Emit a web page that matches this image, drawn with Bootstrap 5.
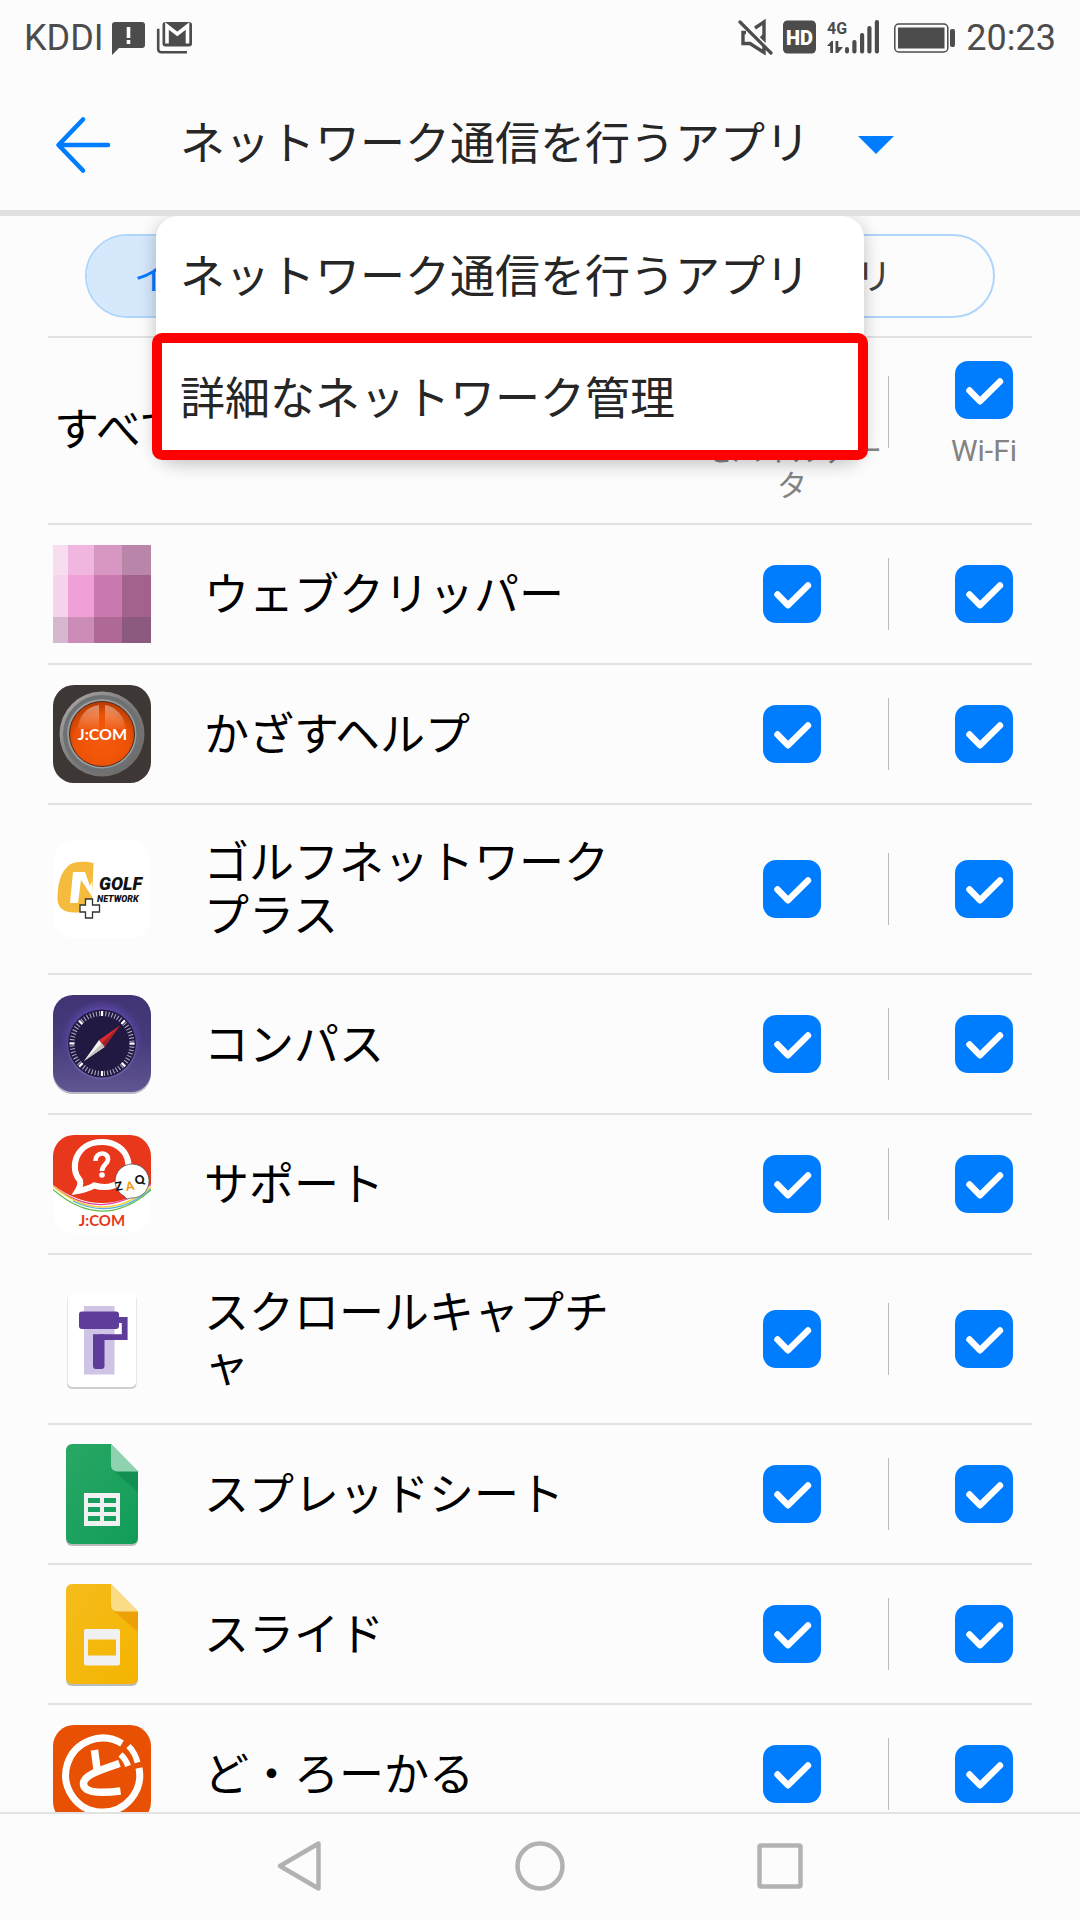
<!DOCTYPE html>
<html lang="ja">
<head>
<meta charset="utf-8">
<meta name="viewport" content="width=device-width, initial-scale=1">
<title>ネットワーク通信を行うアプリ</title>
<link href="https://cdn.jsdelivr.net/npm/bootstrap@5.3.0/dist/css/bootstrap.min.css" rel="stylesheet">
<style>
  :root { --accent: #007dff; --line: #e2e2e2; --paper: #fcfcfc; --status: #4c4c4c; }
  body { background: var(--paper); color: #000; font-family: Roboto, "Noto Sans CJK JP", sans-serif; font-size: 45px; line-height: 53px; }
  svg { display: block; flex: none; overflow: visible; }
  .status-bar { height: 76px; padding: 0 24px; font-size: 36px; line-height: 42px; color: var(--status); }
  .status-icons { gap: 11px; }
  .title-bar { height: 140px; padding: 3px 56px 0; border-bottom: 6px solid #e0e0e0; }
  .title-toggle { margin-left: 70px; gap: 48px; font-size: 45px; line-height: 53px; color: #262626; }
  .title-menu.dropdown-menu { top: calc(100% + 6px); left: 156px; right: 216px; z-index: 5; padding: 0; border: 0; border-radius: 22px; font-size: 45px; background: #fff; box-shadow: 0 4px 18px rgba(0,0,0,.24); clip-path: inset(0 -30px -30px -30px); }
  .title-menu .dropdown-item { height: 122px; padding: 0 24px; color: #262626; background: none; }
  .picked::after { content: ""; position: absolute; inset: -5px -4px 0; border: 10px solid #f00; border-radius: 10px; pointer-events: none; }
  .app-scroll { overflow-y: auto; scrollbar-width: none; }
  .app-scroll::-webkit-scrollbar { display: none; }
  .kind-tabs { margin: 18px 85px; height: 84px; border: 2px solid #b0d5fd; border-radius: 42px; overflow: hidden; }
  .kind-tabs .btn { font-size: 36px; line-height: 42px; color: #404040; border: 0; border-radius: 0; padding: 4px 0 0; }
  .kind-tabs .btn.active { background: #d6e8fc; color: var(--accent); }
  .hairline { height: 2px; margin: 0 48px; background: var(--line); }
  .app-row { min-height: 138px; padding: 16px 0; padding-left: 53px; }
  .app-row.tall { min-height: 168px; }
  .app-label { flex: 1 1 0; min-width: 0; padding: 2px 60px 0 53px; line-break: anywhere; }
  .all-row { padding-left: 54px; min-height: 185px; }
  .tick-col { width: 192px; flex: none; }
  .tick-sep { width: 1px; height: 72px; margin-right: -1px; background: #bbb; flex: none; }
  .all-row .tick-col { padding: 23px 5px 20px; gap: 14px; }
  .all-row .tick-sep { margin-top: 38px; }
  .tick-col label { font-size: 30px; line-height: 35px; color: #838383; text-align: center; }
  .form-check-input.tick { width: 58px; height: 58px; margin: 0; border: 0; border-radius: 13px; flex: none; }
  .form-check-input.tick:checked { background-color: var(--accent); background-size: 100% 100%; background-image: url("data:image/svg+xml,%3csvg xmlns='http://www.w3.org/2000/svg' viewBox='0 0 58 58'%3e%3cpath d='M14.5 29.5L25 40.3L45 20.5' fill='none' stroke='%23fff' stroke-width='6.4' stroke-linecap='round' stroke-linejoin='round'/%3e%3c/svg%3e"); }
  .nav-keys { height: 108px; padding-bottom: 2px; border-top: 2px solid var(--line); gap: 190px; }
</style>
</head>
<body>
<div class="vh-100 d-flex flex-column overflow-hidden">

  <div class="status-bar d-flex align-items-center justify-content-between flex-shrink-0">
    <div class="status-icons d-flex align-items-center">
      <span>KDDI</span>
      <svg class="ms-n1" width="33" height="34" viewBox="3 1 33 34"><g transform="translate(0 1)"><path d="M3 1h27a3 3 0 0 1 3 3v20a3 3 0 0 1-3 3H7l-7 7V4a3 3 0 0 1 3-3z" fill="#4c4c4c"/><path d="M16.500 6v11M16.500 19v4" stroke="#fff" stroke-width="3.600"/></g></svg>
      <svg width="35" height="33" viewBox="2 1 35 33"><path d="M1.200 7v20.500a3 3 0 0 0 3 3H30" transform="translate(0 .8)" fill="none" stroke="#4c4c4c" stroke-width="2.600"/><rect x="5.500" y="1" width="29.500" height="24.500" rx="3" fill="#4c4c4c"/><path d="M10 22.500V5l10.300 8L30.500 5v17.500" fill="none" stroke="#fff" stroke-width="3.600"/></svg>
    </div>
    <div class="status-icons d-flex align-items-center">
      <svg width="33" height="34" viewBox="0 1 33 34" fill="none" stroke="#4c4c4c"><path d="M1 2L32 33" stroke-width="3.200" stroke-linecap="round"/><path d="M7 12.500H4v11h7l14 9v-6M16 8l9-6v17l-3-3" stroke-width="3.400"/></svg>
      <svg width="33" height="34" viewBox="0 1 33 34"><rect y=".5" width="33" height="33" rx="4.500" fill="#4c4c4c"/><text x="16.500" y="24.500" font-family="Roboto, sans-serif" font-weight="900" font-size="20" text-anchor="middle" fill="#fff">HD</text></svg>
      <svg width="52" height="34" viewBox="0 1 52 34" fill="#4c4c4c"><text x="0" y="14" font-family="Roboto, sans-serif" font-weight="700" font-size="16">4G</text><path d="M0 26l4.500-5H6v12H3.200v-7zM8.500 21h2.800v6H16l-5 6H8.500z"/><rect x="18" y="27" width="4" height="6.500" rx="2"/><rect x="25.300" y="20" width="4.200" height="13.500" rx="2"/><rect x="33" y="13" width="4.200" height="20.500" rx="2"/><rect x="40.300" y="6" width="4.200" height="27.500" rx="2"/><rect x="47.800" y="0" width="4.200" height="33.500" rx="2"/></svg>
      <svg class="ms-1" width="61" height="30" viewBox="0 0 61 30"><rect x=".8" y="1" width="53" height="28" rx="4" fill="none" stroke="#4c4c4c" stroke-width="1.500"/><rect x="4" y="4.500" width="46.500" height="21" fill="#4c4c4c"/><rect x="56" y="6" width="5" height="18" rx="2" fill="#4c4c4c"/></svg>
      <span>20:23</span>
    </div>
  </div>

  <header class="title-bar position-relative d-flex align-items-center flex-shrink-0">
    <button class="btn p-0 border-0" type="button" aria-label="戻る">
      <svg width="54" height="56" viewBox="0 0 54 56" fill="none" stroke="#007dff" stroke-width="4.600" stroke-linecap="round" stroke-linejoin="round"><path d="M27 2.500L2.500 28L27 53.500M3 28h49"/></svg>
    </button>
    <button class="title-toggle btn p-0 border-0 d-flex align-items-center text-nowrap" type="button" aria-expanded="true" aria-controls="titleMenu">
      ネットワーク通信を行うアプリ
      <svg width="36" height="18" viewBox="0 0 36 18"><path d="M0 0h36L18 18z" fill="#007dff"/></svg>
    </button>
    <ul class="title-menu dropdown-menu show" id="titleMenu">
      <li><a class="dropdown-item d-flex align-items-center" href="#apps">ネットワーク通信を行うアプリ</a></li>
      <li class="picked position-relative"><a class="dropdown-item d-flex align-items-center" href="#detail">詳細なネットワーク管理</a></li>
    </ul>
  </header>

  <main class="app-scroll flex-fill">
    <div class="kind-tabs d-flex">
      <button class="btn active col" type="button">インストール済アプリ</button>
      <button class="btn col" type="button">システムアプリ</button>
    </div>
    <div class="hairline"></div>

    <div class="all-row d-flex align-items-start">
      <span class="flex-fill align-self-center">すべて</span>
      <div class="tick-col d-flex flex-column align-items-center">
        <input class="form-check-input tick" type="checkbox" id="allMobile" checked>
        <label for="allMobile">モバイルデータ</label>
      </div>
      <span class="tick-sep"></span>
      <div class="tick-col d-flex flex-column align-items-center">
        <input class="form-check-input tick" type="checkbox" id="allWifi" checked>
        <label for="allWifi">Wi-Fi</label>
      </div>
    </div>
    <div class="hairline"></div>

    <ul class="list-unstyled m-0" id="apps">
      <li>
        <div class="app-row d-flex align-items-center">
          <svg width="98" height="98" viewBox="0 0 98 98" shape-rendering="crispEdges"><path fill="#f8ddf0" d="M0 0h15v30H0z"/><path fill="#f0b6df" d="M15 0h26v30H15z"/><path fill="#d797c2" d="M41 0h28v30H41z"/><path fill="#b985a9" d="M69 0h29v30H69z"/><path fill="#f7d3ec" d="M0 30h15v42H0z"/><path fill="#efa1d7" d="M15 30h26v42H15z"/><path fill="#c978b0" d="M41 30h28v42H41z"/><path fill="#a3628d" d="M69 30h29v42H69z"/><path fill="#d5b8cd" d="M0 72h15v26H0z"/><path fill="#cb8db8" d="M15 72h26v26H15z"/><path fill="#ae6997" d="M41 72h28v26H41z"/><path fill="#8d5a7f" d="M69 72h29v26H69z"/></svg>
          <span class="app-label">ウェブクリッパー</span>
          <div class="tick-col d-flex justify-content-center"><input class="form-check-input tick" type="checkbox" aria-label="ウェブクリッパー モバイルデータ" checked></div>
          <span class="tick-sep"></span>
          <div class="tick-col d-flex justify-content-center"><input class="form-check-input tick" type="checkbox" aria-label="ウェブクリッパー Wi-Fi" checked></div>
        </div>
        <div class="hairline"></div>
      </li>
      <li>
        <div class="app-row d-flex align-items-center">
          <svg width="98" height="98" viewBox="0 0 98 98">
            <defs>
              <linearGradient id="ring" x1="0" y1="0" x2="1" y2="1"><stop offset="0" stop-color="#b0aeac"/><stop offset=".5" stop-color="#7c7a79"/><stop offset="1" stop-color="#6b6665"/></linearGradient>
              <radialGradient id="knob" cx=".5" cy=".62" r=".6"><stop offset="0" stop-color="#f65a0c"/><stop offset=".7" stop-color="#ec5206"/><stop offset="1" stop-color="#b93c02"/></radialGradient>
              <linearGradient id="shine" x1="0" y1="0" x2="0" y2="1"><stop offset="0" stop-color="#fff" stop-opacity=".42"/><stop offset="1" stop-color="#fff" stop-opacity=".06"/></linearGradient>
            </defs>
            <rect width="98" height="98" rx="21" fill="#3d3836"/>
            <circle cx="49" cy="49" r="42.500" fill="url(#ring)"/>
            <circle cx="49" cy="49" r="37" fill="none" stroke="#6d7173" stroke-width="4"/>
            <circle cx="49" cy="49" r="34.500" fill="#9b9d9d"/>
            <circle cx="49" cy="49" r="32.500" fill="url(#knob)" stroke="#4b2a20"/>
            <path d="M46 20v24H25a24 24 0 0 1 21-24zM52 20v24h20a24 24 0 0 0-20-24z" fill="url(#shine)"/>
            <text x="49.500" y="54.500" font-family="Lato, sans-serif" font-weight="700" font-size="16" text-anchor="middle" fill="#fff">J:COM</text>
          </svg>
          <span class="app-label">かざすヘルプ</span>
          <div class="tick-col d-flex justify-content-center"><input class="form-check-input tick" type="checkbox" aria-label="かざすヘルプ モバイルデータ" checked></div>
          <span class="tick-sep"></span>
          <div class="tick-col d-flex justify-content-center"><input class="form-check-input tick" type="checkbox" aria-label="かざすヘルプ Wi-Fi" checked></div>
        </div>
        <div class="hairline"></div>
      </li>
      <li>
        <div class="app-row tall d-flex align-items-center">
          <svg width="98" height="98" viewBox="0 0 98 98">
            <rect width="98" height="98" rx="21" fill="#fff"/>
            <path d="M40.500 23C32 21 22 21 17 24.500C9 30 6 40 5 50c-1 9-1 15 4 19c5 4 13 4 18 3V65h7v-5h5z" fill="#f4bb3c"/>
            <path d="M20 32h12l5 14 2-5 1 17L28 40l-3 23h-8z" fill="#fff"/>
            <path d="M32.500 59h7v6h7v7h-7v6h-7v-6h-5.500v-7h5.500z" fill="#fff" stroke="#333" stroke-width="1.300"/>
            <g font-family="Roboto, sans-serif" font-weight="900" font-style="italic" fill="#111"><text x="46" y="49.500" font-size="18">GOLF</text><text x="44" y="62" font-size="9">NETWORK</text></g>
          </svg>
          <span class="app-label">ゴルフネットワークプラス</span>
          <div class="tick-col d-flex justify-content-center"><input class="form-check-input tick" type="checkbox" aria-label="ゴルフネットワークプラス モバイルデータ" checked></div>
          <span class="tick-sep"></span>
          <div class="tick-col d-flex justify-content-center"><input class="form-check-input tick" type="checkbox" aria-label="ゴルフネットワークプラス Wi-Fi" checked></div>
        </div>
        <div class="hairline"></div>
      </li>
      <li>
        <div class="app-row d-flex align-items-center">
          <svg width="98" height="98" viewBox="0 0 98 98">
            <defs><linearGradient id="night" x1="0" y1="0" x2="0" y2="1"><stop offset="0" stop-color="#413374"/><stop offset=".5" stop-color="#483c7d"/><stop offset="1" stop-color="#605691"/></linearGradient>
            <radialGradient id="glow"><stop offset=".7" stop-color="#6a4fc4"/><stop offset="1" stop-color="#5a44a5" stop-opacity="0"/></radialGradient></defs>
            <rect y="2" width="98" height="97" rx="20" fill="#b9b6c4"/>
            <rect width="98" height="97" rx="20" fill="url(#night)"/>
            <circle cx="49" cy="45" r="41" fill="url(#glow)" opacity=".8"/>
            <circle cx="49" cy="50" r="34.500" fill="#6a5ea2"/>
            <circle cx="49" cy="48.500" r="34" fill="#211942"/>
            <circle cx="49" cy="48.500" r="30" fill="none" stroke="#aaa6bd" stroke-width="5" stroke-dasharray="1.100 2.041"/>
            <g stroke="#fff" stroke-width="2"><path d="M49 16v5M49 76v5M16.500 48.500h5M76.500 48.500h5M26 25.500l3.500 3.500M72 25.500L68.500 29M26 71.500l3.500-3.500M72 71.500L68.500 68"/></g>
            <path d="M67 30.500L46 45l5.500 7z" fill="#dd2a2c"/><path d="M67 30.500L48.700 48.500l2.800 3.500z" fill="#a21f28"/>
            <path d="M31 66l15-21 5.500 7z" fill="#f4f4f2"/><path d="M31 66l17.700-17.500 2.800 3.500z" fill="#c5c3bd"/>
          </svg>
          <span class="app-label">コンパス</span>
          <div class="tick-col d-flex justify-content-center"><input class="form-check-input tick" type="checkbox" aria-label="コンパス モバイルデータ" checked></div>
          <span class="tick-sep"></span>
          <div class="tick-col d-flex justify-content-center"><input class="form-check-input tick" type="checkbox" aria-label="コンパス Wi-Fi" checked></div>
        </div>
        <div class="hairline"></div>
      </li>
      <li>
        <div class="app-row d-flex align-items-center">
          <svg width="98" height="98" viewBox="0 0 98 98">
            <defs><clipPath id="tile"><rect width="98" height="98" rx="21"/></clipPath></defs>
            <g clip-path="url(#tile)">
              <path fill="#fff" d="M0 0h98v98H0z"/>
              <path fill="#e8371b" d="M0 0h98v50Q49 86 0 50z"/>
              <g fill="none" stroke-width="1.200"><path stroke="#e0409a" d="M0 51Q49 89 98 49"/><path stroke="#f4d13c" stroke-width="1.600" d="M0 51Q49 92.500 98 52"/><path stroke="#54b1dd" d="M20 66Q60 86 98 54"/><path stroke="#63bb4c" d="M0 54.500Q49 97.500 98 55"/></g>
            </g>
            <path d="M27 45.500C16 34 22 7 49 7s34 29 18 40c-8 6-17 6-26 3.500-5 3-10 4.500-16.500 5.500C27 52 28 49 27 45.500z" fill="none" stroke="#fff" stroke-width="6"/>
            <path d="M42.500 26c0-10 13-9.500 12.500-1.500-.3 5-6 5-6 11.500" fill="none" stroke="#fff" stroke-width="4.600"/><circle cx="49" cy="40" r="2.800" fill="#fff"/>
            <path d="M71 61l3 3 4-1a17 17 0 1 0-7-2z" fill="#fff" stroke="#555" stroke-width=".8"/>
            <g font-family="Lato, sans-serif" font-weight="900" font-size="12" fill="#111"><text x="63" y="56" transform="rotate(-10 63 56)">Z</text><text x="73.500" y="56" fill="#f39a0c" transform="rotate(-10 73.500 56)">A</text><text x="83" y="50" transform="rotate(-15 83 50)">Q</text></g>
            <text x="49" y="91" font-family="Lato, sans-serif" font-weight="700" font-size="15" text-anchor="middle" fill="#e8371b">J:COM</text>
          </svg>
          <span class="app-label">サポート</span>
          <div class="tick-col d-flex justify-content-center"><input class="form-check-input tick" type="checkbox" aria-label="サポート モバイルデータ" checked></div>
          <span class="tick-sep"></span>
          <div class="tick-col d-flex justify-content-center"><input class="form-check-input tick" type="checkbox" aria-label="サポート Wi-Fi" checked></div>
        </div>
        <div class="hairline"></div>
      </li>
      <li>
        <div class="app-row tall d-flex align-items-center">
          <svg width="98" height="98" viewBox="0 0 98 98">
            <rect x="14" y="5" width="69.500" height="94" rx="5" fill="#cfcfcf"/><rect x="14.500" y="3" width="68.500" height="94" rx="5" fill="#fff"/>
            <path fill="#cfc3e6" d="M31 16h30.500v68.500H31z"/>
            <rect x="26" y="21.500" width="40" height="17.500" rx="3" fill="#5e3c99"/>
            <path d="M65 30h6.700v17.200H46" fill="none" stroke="#5e3c99" stroke-width="5.800"/><path d="M40 44.300h11.500V76a3 3 0 0 1-3 3H43a3 3 0 0 1-3-3z" fill="#5e3c99"/>
          </svg>
          <span class="app-label">スクロールキャプチャ</span>
          <div class="tick-col d-flex justify-content-center"><input class="form-check-input tick" type="checkbox" aria-label="スクロールキャプチャ モバイルデータ" checked></div>
          <span class="tick-sep"></span>
          <div class="tick-col d-flex justify-content-center"><input class="form-check-input tick" type="checkbox" aria-label="スクロールキャプチャ Wi-Fi" checked></div>
        </div>
        <div class="hairline"></div>
      </li>
      <li>
        <div class="app-row d-flex align-items-center">
          <svg width="98" height="98" viewBox="0 0 98 98">
            <defs><linearGradient id="leaf" x1="0" y1="0" x2="1" y2="1"><stop offset="0" stop-color="#2aa765"/><stop offset="1" stop-color="#109d58"/></linearGradient></defs>
            <rect x="13" y="40" width="72" height="61" rx="6" fill="#bcbcbc"/>
            <path d="M19-1h39l27 27.500V93a6 6 0 0 1-6 6H19a6 6 0 0 1-6-6V5a6 6 0 0 1 6-6z" fill="url(#leaf)"/>
            <path d="M60 25l25 22V27z" fill="#0b7a46" opacity=".45"/><path d="M58-1l27 27.500H64a6 6 0 0 1-6-6z" fill="#8fd2b0"/>
            <path fill="#f1f1f1" d="M31 48h36v33H31z"/><path fill="#17a05d" d="M35 53h12v5H35zM51 53h12v5H51zM35 62h12v5H35zM51 62h12v5H51zM35 71h12v5H35zM51 71h12v5H51z"/>
          </svg>
          <span class="app-label">スプレッドシート</span>
          <div class="tick-col d-flex justify-content-center"><input class="form-check-input tick" type="checkbox" aria-label="スプレッドシート モバイルデータ" checked></div>
          <span class="tick-sep"></span>
          <div class="tick-col d-flex justify-content-center"><input class="form-check-input tick" type="checkbox" aria-label="スプレッドシート Wi-Fi" checked></div>
        </div>
        <div class="hairline"></div>
      </li>
      <li>
        <div class="app-row d-flex align-items-center">
          <svg width="98" height="98" viewBox="0 0 98 98">
            <defs><linearGradient id="sun" x1="0" y1="0" x2="1" y2="1"><stop offset="0" stop-color="#f5bc1c"/><stop offset="1" stop-color="#f4b400"/></linearGradient></defs>
            <rect x="13" y="40" width="72" height="61" rx="6" fill="#bcbcbc"/>
            <path d="M19-1h39l27 27.500V93a6 6 0 0 1-6 6H19a6 6 0 0 1-6-6V5a6 6 0 0 1 6-6z" fill="url(#sun)"/>
            <path d="M60 25l25 22V27z" fill="#e38a00" opacity=".5"/><path d="M58-1l27 27.500H64a6 6 0 0 1-6-6z" fill="#fadb86"/>
            <path fill="#f1f1f1" fill-rule="evenodd" d="M33 44h32a2 2 0 0 1 2 2v32.500a2 2 0 0 1-2 2H33a2 2 0 0 1-2-2V46a2 2 0 0 1 2-2zM35 54.500v16h28v-16z"/>
          </svg>
          <span class="app-label">スライド</span>
          <div class="tick-col d-flex justify-content-center"><input class="form-check-input tick" type="checkbox" aria-label="スライド モバイルデータ" checked></div>
          <span class="tick-sep"></span>
          <div class="tick-col d-flex justify-content-center"><input class="form-check-input tick" type="checkbox" aria-label="スライド Wi-Fi" checked></div>
        </div>
        <div class="hairline"></div>
      </li>
      <li>
        <div class="app-row d-flex align-items-center">
          <svg width="98" height="98" viewBox="0 0 98 98">
            <rect width="98" height="98" rx="21" fill="#e85003"/>
            <g fill="none" stroke="#fff"><path d="M69 18.500A37 37 0 1 0 86 43" stroke-width="7"/><path d="M75.500 21Q82 27.500 84.500 37.500M67.500 29.500Q73 34.500 75 41" stroke-width="6"/>
            <path d="M41.500 25l2.500 19M66.500 38.500C48 45 30.500 50 30.500 58.500S44 69 67.500 66" stroke-width="7.500"/></g>
          </svg>
          <span class="app-label">ど・ろーかる</span>
          <div class="tick-col d-flex justify-content-center"><input class="form-check-input tick" type="checkbox" aria-label="ど・ろーかる モバイルデータ" checked></div>
          <span class="tick-sep"></span>
          <div class="tick-col d-flex justify-content-center"><input class="form-check-input tick" type="checkbox" aria-label="ど・ろーかる Wi-Fi" checked></div>
        </div>
      </li>
    </ul>
  </main>

  <nav class="nav-keys d-flex align-items-center justify-content-center flex-shrink-0" aria-label="ナビゲーション">
    <button class="btn p-0 border-0" type="button" aria-label="戻る"><svg width="50" height="50" viewBox="0 0 50 50" fill="none" stroke="#b2b2b2" stroke-width="4.500" stroke-linejoin="round"><path d="M43.500 2.500v45L5 25z"/></svg></button>
    <button class="btn p-0 border-0" type="button" aria-label="ホーム"><svg width="50" height="50" viewBox="0 0 50 50" fill="none" stroke="#b2b2b2" stroke-width="4.500"><circle cx="25" cy="25" r="22.500"/></svg></button>
    <button class="btn p-0 border-0" type="button" aria-label="履歴"><svg width="50" height="50" viewBox="0 0 50 50" fill="none" stroke="#b2b2b2" stroke-width="4.500"><rect x="4.500" y="4.500" width="41" height="41" rx="1.500"/></svg></button>
  </nav>
</div>
<script src="https://cdn.jsdelivr.net/npm/bootstrap@5.3.0/dist/js/bootstrap.bundle.min.js"></script>
</body>
</html>
